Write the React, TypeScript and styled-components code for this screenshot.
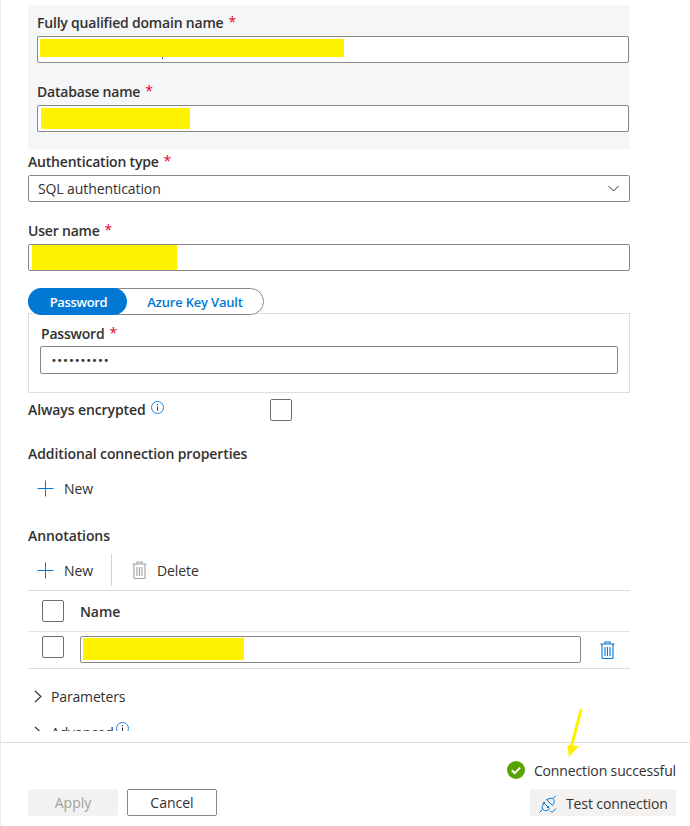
import React from "react";
import styled, { createGlobalStyle } from "styled-components";

const Global = createGlobalStyle`
  html, body { margin: 0; padding: 0; background: #fff; }
  body { font-family: "Open Sans", "Noto Sans", sans-serif; font-size: 14px; color: #323130; }
`;

const Page = styled.div`
  position: relative;
  width: 690px;
  height: 826px;
  overflow: hidden;
  background: #fff;
  box-sizing: border-box;
  border-left: 1px solid #ececec;
  display: flex;
  flex-direction: column;
`;
const Scroller = styled.div`
  height: 731px;
  flex: none;
  overflow: hidden;
  padding: 5px 60px 0 27px;
  box-sizing: border-box;
`;
const Panel = styled.div`
  background: #f5f6f8;
  padding: 7px 1px 17px 9px;
  margin-bottom: 2px;
  display: flex;
  flex-direction: column;
  gap: 18px;
`;
const Field = styled.div<{ $mb?: number }>`
  margin-bottom: ${(p) => p.$mb ?? 0}px;
`;
const Label = styled.div<{ $gap?: number; $inset?: number }>`
  height: 20px;
  line-height: 21px;
  font-weight: 600;
  letter-spacing: -0.2px;
  margin-bottom: ${(p) => p.$gap ?? 4}px;
  padding-left: ${(p) => p.$inset ?? 0}px;
  white-space: nowrap;
`;
const Star = styled.span`
  color: #e3002b;
  margin-left: 5px;
  position: relative;
  top: -1px;
  font-weight: 500;
`;
const InputBox = styled.div<{ $h?: number; $grow?: boolean }>`
  position: relative;
  height: ${(p) => p.$h ?? 27}px;
  box-sizing: border-box;
  background: #fff;
  border: 1px solid #8a8886;
  border-radius: 2px;
  display: flex;
  align-items: center;
  ${(p) => (p.$grow ? "flex: 1;" : "")}
`;
const Redaction = styled.div<{ $w: number; $h: number; $l: number; $t: number }>`
  width: ${(p) => p.$w}px;
  height: ${(p) => p.$h}px;
  margin-left: ${(p) => p.$l}px;
  align-self: flex-start;
  margin-top: ${(p) => p.$t}px;
  background: #fff200;
`;
const Speck = styled.span`
  position: absolute;
  left: 124px;
  top: 20px;
  width: 1px;
  height: 2px;
  background: #605e5c;
`;
const SelectText = styled.span`
  padding-left: 9px;
  flex: 1;
  letter-spacing: -0.1px;
`;
const Chevron = styled.svg`
  margin-right: 10px;
`;
const Toggle = styled.div`
  position: relative;
  z-index: 1;
  width: 236px;
  height: 27px;
  box-sizing: border-box;
  border: 1px solid #8a8886;
  border-radius: 14px;
  background: #fff;
  display: flex;
  align-items: stretch;
`;
const ToggleOn = styled.div`
  width: 99px;
  margin: -1px 0 -1px -1px;
  padding-left: 2px;
  box-sizing: border-box;
  border-radius: 14px;
  background: #0078d4;
  color: #fff;
  font-weight: 600;
  font-size: 13px;
  display: flex;
  align-items: center;
  justify-content: center;
  letter-spacing: -0.35px;
`;
const ToggleOff = styled.div`
  flex: 1;
  color: #0078d4;
  font-weight: 600;
  font-size: 13px;
  display: flex;
  align-items: center;
  justify-content: center;
  letter-spacing: -0.2px;
`;
const PasswordBox = styled.div`
  margin-top: -2px;
  border: 1px solid #dedede;
  padding: 9px 11px 17px 11px;
  height: 80px;
  box-sizing: border-box;
`;
const Dots = styled.span`
  padding: 1px 0 0 10px;
  letter-spacing: -0.1px;
  font-size: 10px;
  font-family: "DejaVu Sans", sans-serif;
  line-height: 1;
`;
const AlwaysRow = styled.div`
  margin-top: 5px;
  height: 23px;
  display: flex;
  align-items: center;
`;
const AlwaysLabel = styled.div`
  width: 242px;
  display: flex;
  align-items: center;
  gap: 5px;
  font-weight: 600;
  line-height: 22px;
  letter-spacing: -0.1px;
`;
const InfoIcon = styled.svg`
  position: relative;
  top: -2px;
`;
const Check = styled.div`
  width: 22px;
  height: 22px;
  flex: none;
  box-sizing: border-box;
  border: 1px solid #6f6e6d;
  border-radius: 2px;
  background: #fff;
`;
const SectionTitle = styled.div<{ $mt: number }>`
  margin-top: ${(p) => p.$mt}px;
  height: 20px;
  line-height: 20px;
  font-weight: 600;
  letter-spacing: -0.1px;
`;
const NewRow = styled.div<{ $mt: number; $h: number }>`
  margin-top: ${(p) => p.$mt}px;
  height: ${(p) => p.$h}px;
  display: flex;
  align-items: center;
`;
const ToolButton = styled.div<{ $w: number; $pl: number }>`
  width: ${(p) => p.$w}px;
  padding-left: ${(p) => p.$pl}px;
  box-sizing: border-box;
  display: flex;
  align-items: center;
  gap: 10px;
  letter-spacing: -0.1px;
`;
const ToolDivider = styled.div`
  width: 1px;
  height: 32px;
  background: #d4d4d4;
  margin-right: 20px;
`;
const Table = styled.div`
  margin-top: 3px;
  border-top: 1px solid #d9d9d9;
`;
const HeadRow = styled.div`
  height: 40px;
  border-bottom: 1px solid #e4e4e4;
  display: flex;
  align-items: center;
  padding-left: 14px;
  gap: 16px;
  font-weight: 600;
  letter-spacing: -0.1px;
`;
const BodyRow = styled.div`
  height: 37px;
  border-bottom: 1px solid #dedede;
  display: flex;
  align-items: flex-start;
  padding: 4px 0 0 14px;
  gap: 16px;
  box-sizing: border-box;
`;
const RowTrashWrap = styled.div`
  margin: 5px 15px 0 3px;
  display: flex;
`;
const Expander = styled.div<{ $mt: number }>`
  margin-top: ${(p) => p.$mt}px;
  height: 20px;
  display: flex;
  align-items: center;
  gap: 9px;
  padding-left: 6px;
  font-weight: 500;
  letter-spacing: -0.15px;
`;
const AdvInfo = styled.svg`
  position: relative;
  top: -4px;
  margin-left: -7px;
`;
const Footer = styled.div`
  margin-top: 11px;
  flex: 1;
  border-top: 1px solid #dcdcdc;
  padding: 0 14px 10px 27px;
  display: flex;
  flex-direction: column;
  align-items: stretch;
`;
const Status = styled.div`
  margin-top: 17px;
  height: 20px;
  display: flex;
  justify-content: flex-end;
  align-items: center;
  gap: 9px;
  letter-spacing: -0.13px;
`;
const Actions = styled.div`
  margin-top: 9px;
  display: flex;
  align-items: center;
`;
const Apply = styled.div`
  width: 90px;
  height: 27px;
  background: #f3f2f1;
  color: #a19f9d;
  border-radius: 2px;
  display: flex;
  align-items: center;
  justify-content: center;
  margin-right: 9px;
`;
const Cancel = styled.div`
  width: 90px;
  height: 27px;
  box-sizing: border-box;
  border: 1px solid #8a8886;
  border-radius: 2px;
  display: flex;
  align-items: center;
  justify-content: center;
`;
const TestButton = styled.div`
  margin-left: auto;
  width: 146px;
  height: 27px;
  background: #f3f2f1;
  display: flex;
  align-items: center;
  gap: 9px;
  padding: 2px 0 0 9px;
  box-sizing: border-box;
  letter-spacing: -0.1px;
`;
const Arrow = styled.svg`
  position: absolute;
  left: 559px;
  top: 704px;
`;

const PlusIcon = () => (
  <svg width="17" height="17" viewBox="0 0 17 17">
    <path d="M8.5 0.5v16M0.5 8.5h16" stroke="#0078d4" strokeWidth="1" fill="none" />
  </svg>
);
const TrashIcon = ({ c }: { c: string }) => (
  <svg width="15" height="18" viewBox="0 0 15 18" fill="none" stroke={c} strokeWidth="1.1">
    <path d="M0.5 3h14M5 3V1h5v2M2 3v13.500c0 .6.4 1 1 1h9c.6 0 1-.4 1-1V3" />
    <path d="M5 6v9M7.500 6v9M10 6v9" />
  </svg>
);
const Info = () => (
  <InfoIcon width="13" height="13" viewBox="0 0 13 13" fill="none">
    <circle cx="6.5" cy="6.5" r="6" stroke="#0078d4" strokeWidth="0.9" />
    <path d="M6.5 5.600v4" stroke="#323130" strokeWidth="1" />
    <circle cx="6.5" cy="3.8" r="0.7" fill="#323130" />
  </InfoIcon>
);
const ChevronRight = () => (
  <svg width="8" height="13" viewBox="0 0 8 13" fill="none">
    <path d="M1 1l6 5.500-6 5.500" stroke="#323130" strokeWidth="1.1" />
  </svg>
);
const Req = () => <Star>*</Star>;

export default function App() {
  return (
    <Page>
      <Global />
      <Scroller>
        <Panel>
          <Field>
            <Label>Fully qualified domain name<Req /></Label>
            <InputBox>
              <Redaction $w={304} $h={18} $l={2} $t={2} />
              <Speck />
            </InputBox>
          </Field>
          <Field>
            <Label>Database name<Req /></Label>
            <InputBox>
              <Redaction $w={149} $h={21} $l={3} $t={2} />
            </InputBox>
          </Field>
        </Panel>
        <Field $mb={18}>
          <Label>Authentication type<Req /></Label>
          <InputBox>
            <SelectText>SQL authentication</SelectText>
            <Chevron width="11" height="7" viewBox="0 0 11 7" fill="none">
              <path d="M0.5 1l5 5 5-5" stroke="#323130" strokeWidth="1" />
            </Chevron>
          </InputBox>
        </Field>
        <Field $mb={17}>
          <Label>User name<Req /></Label>
          <InputBox>
            <Redaction $w={145} $h={25} $l={3} $t={0} />
          </InputBox>
        </Field>
        <Toggle>
          <ToggleOn>Password</ToggleOn>
          <ToggleOff>Azure Key Vault</ToggleOff>
        </Toggle>
        <PasswordBox>
          <Label $gap={3} $inset={1}>Password<Req /></Label>
          <InputBox $h={28}>
            <Dots>••••••••••</Dots>
          </InputBox>
        </PasswordBox>
        <AlwaysRow>
          <AlwaysLabel>Always encrypted <Info /></AlwaysLabel>
          <Check />
        </AlwaysRow>
        <SectionTitle $mt={23}>Additional connection properties</SectionTitle>
        <NewRow $mt={8} $h={32}>
          <ToolButton $w={80} $pl={9}><PlusIcon /> New</ToolButton>
        </NewRow>
        <SectionTitle $mt={22}>Annotations</SectionTitle>
        <NewRow $mt={7} $h={34}>
          <ToolButton $w={83} $pl={9}><PlusIcon /> New</ToolButton>
          <ToolDivider />
          <ToolButton $w={90} $pl={0}><TrashIcon c="#a19f9d" /> Delete</ToolButton>
        </NewRow>
        <Table>
          <HeadRow><Check /> Name</HeadRow>
          <BodyRow>
            <Check />
            <InputBox $grow>
              <Redaction $w={161} $h={22} $l={2} $t={1} />
            </InputBox>
            <RowTrashWrap><TrashIcon c="#0078d4" /></RowTrashWrap>
          </BodyRow>
        </Table>
        <Expander $mt={17}>
          <ChevronRight />
          Parameters
        </Expander>
        <Expander $mt={16}>
          <ChevronRight />
          Advanced
          <AdvInfo width="13" height="13" viewBox="0 0 13 13" fill="none">
            <circle cx="6.5" cy="6.5" r="6" stroke="#0078d4" strokeWidth="0.9" />
            <path d="M6.5 5.600v4" stroke="#323130" strokeWidth="1" />
            <circle cx="6.5" cy="3.8" r="0.7" fill="#323130" />
          </AdvInfo>
        </Expander>
      </Scroller>
      <Footer>
        <Status>
          <svg width="18" height="18" viewBox="0 0 18 18">
            <circle cx="9" cy="9" r="9" fill="#57a300" />
            <path d="M4.800 9.300l2.900 2.900 5.500-5.600" stroke="#fff" strokeWidth="2" fill="none" />
          </svg>
          Connection successful
        </Status>
        <Actions>
          <Apply>Apply</Apply>
          <Cancel>Cancel</Cancel>
          <TestButton>
            <svg width="18" height="18" viewBox="0 0 18 18" fill="none" stroke="#0078d4" strokeWidth="1">
              <path d="M0.500 17.500l3.500-3.500M17 0.500l-3.500 3.500" />
              <path d="M4.500 7.500l6 6-1.500 1.500c-1.500 1-3 1-4.500 0s-2-3-.5-5z" />
              <path d="M7.500 4.500l6 6 1-1.500c1-1.500 1-3 0-4.500s-3-1.500-5-.5z" />
              <path d="M4 9l2-2M8 13l2-2" />
              <path d="M11 15.500l2 2 4-4" />
            </svg>
            Test connection
          </TestButton>
        </Actions>
      </Footer>
      <Arrow width="30" height="58" viewBox="0 0 30 58">
        <path d="M21 6L11 44" stroke="#fff200" strokeWidth="3" strokeLinecap="round" fill="none" />
        <path d="M7 41L19 42L9 53z" fill="#fff200" />
      </Arrow>
    </Page>
  );
}
